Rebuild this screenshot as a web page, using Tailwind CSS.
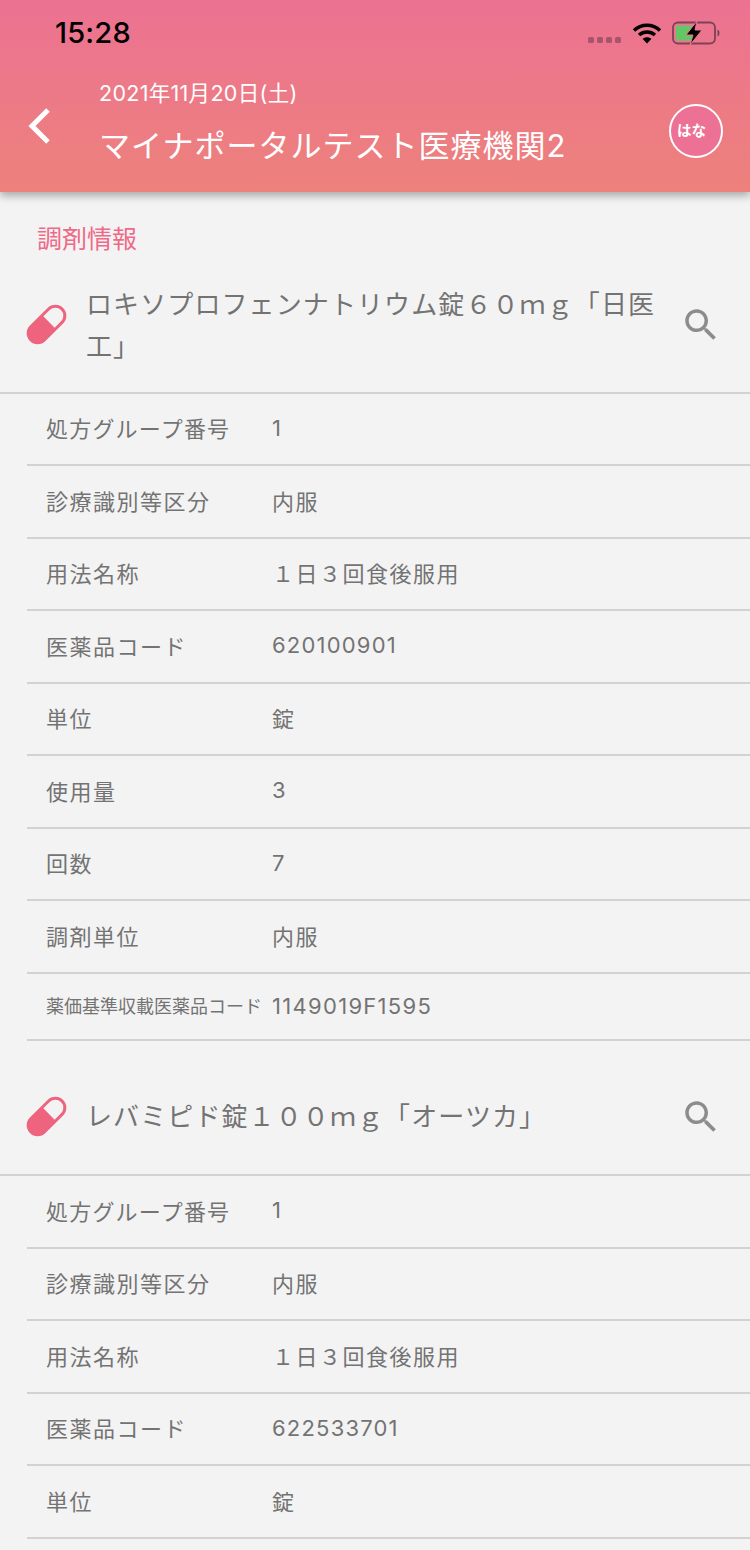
<!DOCTYPE html>
<html lang="ja">
<head>
<meta charset="UTF-8" />
<title>調剤情報</title>
<script src="https://cdn.jsdelivr.net/npm/@tailwindcss/browser@4"></script>
</head>
<body class="w-[750px] h-[1550px] overflow-hidden bg-[#f3f3f3] text-[#737373] font-['Inter','Noto_Sans_CJK_JP',sans-serif]">

<header class="relative z-10 h-[192px] bg-gradient-to-b from-[#ec7292] to-[#ed817b] shadow-[0_4px_8px_rgba(0,0,0,0.3)]">
  <div class="flex justify-between items-start h-[66px]">
    <div class="pl-[55px] pt-[15px] text-[29px] leading-[36px] font-medium text-black tracking-[0.2px]">15:28</div>
    <div class="flex items-center gap-[13px] pt-[21px] pr-[30px]">
      <div class="flex gap-[3px] mt-[13px] ml-[3px]">
        <span class="w-[6px] h-[6px] rounded-[1.5px] bg-[#a8546c]"></span>
        <span class="w-[6px] h-[6px] rounded-[1.5px] bg-[#a8546c]"></span>
        <span class="w-[6px] h-[6px] rounded-[1.5px] bg-[#a8546c]"></span>
        <span class="w-[6px] h-[6px] rounded-[1.5px] bg-[#a8546c]"></span>
      </div>
      <svg width="30" height="22" viewBox="0 0 30 22" class="-ml-[2px]">
        <path d="M2 8.5C9 1.5 21 1.500 28 8.5" fill="none" stroke="#000" stroke-width="3.4"/>
        <path d="M7 13C11.500 9 18.500 9 23 13" fill="none" stroke="#000" stroke-width="3.400"/>
        <path d="M15 21.500L10.500 16.800C13 14.600 17 14.600 19.500 16.800Z" fill="#000"/>
      </svg>
      <svg width="48" height="24" viewBox="0 0 48 24" class="-ml-[3px]">
        <rect x="1" y="1.500" width="42" height="21" rx="5" fill="none" stroke="#7d4258" stroke-width="1.800"/>
        <path d="M45.500 8.500C47 9 47.500 10.500 47.500 12C47.500 13.500 47 15 45.500 15.500Z" fill="#7d4258"/>
        <rect x="4" y="4.500" width="16" height="15" rx="2" fill="#63c766"/>
        <path d="M25 0L14 14H21L18 24L30 9H23Z" fill="#000" stroke="#ee7591" stroke-width="1"/>
      </svg>
    </div>
  </div>
  <div class="flex items-center h-[126px]">
    <svg width="26" height="38" viewBox="0 0 26 38" class="ml-[27px] shrink-0 -mt-[6px]">
      <path d="M21 3L5 19L21 35" fill="none" stroke="#fff" stroke-width="5"/>
    </svg>
    <div class="ml-[46px] flex-1 text-white -mt-[8px]">
      <div class="text-[21.500px] leading-[28px] tracking-[0.3px] -mt-[2px]">2021年11月20日(土)</div>
      <div class="text-[31px] leading-[46px] mt-[16px] tracking-[1px]">マイナポータルテスト医療機関2</div>
    </div>
    <div class="mr-[27px] w-[54px] h-[54px] rounded-full border-2 border-white bg-[#ec7195] flex items-center justify-center text-white text-[14.500px] font-bold mt-[4px] pr-[9px]">はな</div>
  </div>
</header>

<main>
  <h2 class="pl-[37px] pt-[29px] text-[25px] leading-[36px] text-[#ef6a88]">調剤情報</h2>

  <div class="flex items-center h-[137.500px] pt-[5px] -mt-[1px] border-b-2 border-[#d2d2d2] pl-[27px] pr-[30px]">
    <svg width="41" height="41" viewBox="0 0 41 41" class="shrink-0 -mt-[4px] -ml-[1px]">
      <rect x="-3" y="9.500" width="47" height="22" rx="11" transform="rotate(-45 20.500 20.500)" fill="#ee647e"/>
      <path d="M24 12.500H33a8 8 0 0 1 0 16H24Z" transform="rotate(-45 20.500 20.500)" fill="#f3f3f3"/>
    </svg>
    <div class="ml-[19px] flex-1 text-[26px] leading-[42px] tracking-[1.1px]">ロキソプロフェンナトリウム錠６０ｍｇ「日医工」</div>
    <svg width="42" height="42" viewBox="0 0 24 24" class="shrink-0 ml-[21px] -mr-[2px] -mt-[2px] fill-[#8c8c8c]">
      <path d="M15.500 14h-.79l-.28-.27C15.410 12.590 16 11.110 16 9.500 16 5.910 13.090 3 9.500 3S3 5.910 3 9.500 5.910 16 9.500 16c1.610 0 3.090-.59 4.230-1.570l.27.28v.79l5 4.990L20.490 19l-4.990-5zm-6 0C7.010 14 5 11.990 5 9.500S7.010 5 9.500 5 14 7.010 14 9.500 11.990 14 9.500 14z"/>
    </svg>
  </div>

  <div class="ml-[27px]">
    <div class="flex items-center h-[72.500px] pt-[2px] border-b-2 border-[#d2d2d2]"><div class="w-[245px] pl-[19px] text-[22px] tracking-[1.2px] shrink-0">処方グループ番号</div><div class="text-[22px] -mt-[3px]">1</div></div>
    <div class="flex items-center h-[72.500px] pt-[2px] border-b-2 border-[#d2d2d2]"><div class="w-[245px] pl-[19px] text-[22px] tracking-[1.500px] shrink-0">診療識別等区分</div><div class="text-[22px] tracking-[1.500px]">内服</div></div>
    <div class="flex items-center h-[72.500px] pt-[2px] border-b-2 border-[#d2d2d2]"><div class="w-[245px] pl-[19px] text-[22px] tracking-[1.500px] shrink-0">用法名称</div><div class="text-[22px] tracking-[1.500px]">１日３回食後服用</div></div>
    <div class="flex items-center h-[72.500px] pt-[2px] border-b-2 border-[#d2d2d2]"><div class="w-[245px] pl-[19px] text-[22px] tracking-[1.500px] shrink-0">医薬品コード</div><div class="text-[22px] tracking-[1.200px] -mt-[3px]">620100901</div></div>
    <div class="flex items-center h-[72.500px] pt-[2px] border-b-2 border-[#d2d2d2]"><div class="w-[245px] pl-[19px] text-[22px] tracking-[1.500px] shrink-0">単位</div><div class="text-[22px] tracking-[1.500px]">錠</div></div>
    <div class="flex items-center h-[72.500px] pt-[2px] border-b-2 border-[#d2d2d2]"><div class="w-[245px] pl-[19px] text-[22px] tracking-[1.500px] shrink-0">使用量</div><div class="text-[22px] -mt-[3px]">3</div></div>
    <div class="flex items-center h-[72.500px] pt-[2px] border-b-2 border-[#d2d2d2]"><div class="w-[245px] pl-[19px] text-[22px] tracking-[1.500px] shrink-0">回数</div><div class="text-[22px] -mt-[3px]">7</div></div>
    <div class="flex items-center h-[72.500px] pt-[2px] border-b-2 border-[#d2d2d2]"><div class="w-[245px] pl-[19px] text-[22px] tracking-[1.500px] shrink-0">調剤単位</div><div class="text-[22px] tracking-[1.500px]">内服</div></div>
    <div class="flex items-center h-[67px] border-b-2 border-[#d2d2d2]"><div class="w-[245px] pl-[19px] text-[18px] shrink-0">薬価基準収載医薬品コード</div><div class="text-[22px] tracking-[1.300px]">1149019F1595</div></div>
  </div>

  <div class="flex items-center h-[135.500px] pt-[19px] border-b-2 border-[#d2d2d2] pl-[27px] pr-[30px]">
    <svg width="41" height="41" viewBox="0 0 41 41" class="shrink-0 -ml-[1px]">
      <rect x="-3" y="9.500" width="47" height="22" rx="11" transform="rotate(-45 20.500 20.500)" fill="#ee647e"/>
      <path d="M24 12.500H33a8 8 0 0 1 0 16H24Z" transform="rotate(-45 20.500 20.500)" fill="#f3f3f3"/>
    </svg>
    <div class="ml-[19px] flex-1 text-[26px] leading-[40px] tracking-[1.1px]">レバミピド錠１００ｍｇ「オーツカ」</div>
    <svg width="42" height="42" viewBox="0 0 24 24" class="shrink-0 ml-[21px] -mr-[2px] fill-[#8c8c8c]">
      <path d="M15.500 14h-.79l-.28-.27C15.410 12.590 16 11.110 16 9.500 16 5.910 13.090 3 9.500 3S3 5.910 3 9.500 5.910 16 9.500 16c1.610 0 3.090-.59 4.230-1.570l.27.28v.79l5 4.990L20.490 19l-4.990-5zm-6 0C7.010 14 5 11.990 5 9.500S7.010 5 9.500 5 14 7.010 14 9.500 11.990 14 9.500 14z"/>
    </svg>
  </div>

  <div class="ml-[27px]">
    <div class="flex items-center h-[72.500px] pt-[2px] border-b-2 border-[#d2d2d2]"><div class="w-[245px] pl-[19px] text-[22px] tracking-[1.2px] shrink-0">処方グループ番号</div><div class="text-[22px] -mt-[3px]">1</div></div>
    <div class="flex items-center h-[72.500px] pt-[2px] border-b-2 border-[#d2d2d2]"><div class="w-[245px] pl-[19px] text-[22px] tracking-[1.500px] shrink-0">診療識別等区分</div><div class="text-[22px] tracking-[1.500px]">内服</div></div>
    <div class="flex items-center h-[72.500px] pt-[2px] border-b-2 border-[#d2d2d2]"><div class="w-[245px] pl-[19px] text-[22px] tracking-[1.500px] shrink-0">用法名称</div><div class="text-[22px] tracking-[1.500px]">１日３回食後服用</div></div>
    <div class="flex items-center h-[72.500px] pt-[2px] border-b-2 border-[#d2d2d2]"><div class="w-[245px] pl-[19px] text-[22px] tracking-[1.500px] shrink-0">医薬品コード</div><div class="text-[22px] tracking-[1.200px] -mt-[3px]">622533701</div></div>
    <div class="flex items-center h-[72.500px] pt-[2px] border-b-2 border-[#d2d2d2]"><div class="w-[245px] pl-[19px] text-[22px] tracking-[1.500px] shrink-0">単位</div><div class="text-[22px] tracking-[1.500px]">錠</div></div>
  </div>
</main>
</body>
</html>
